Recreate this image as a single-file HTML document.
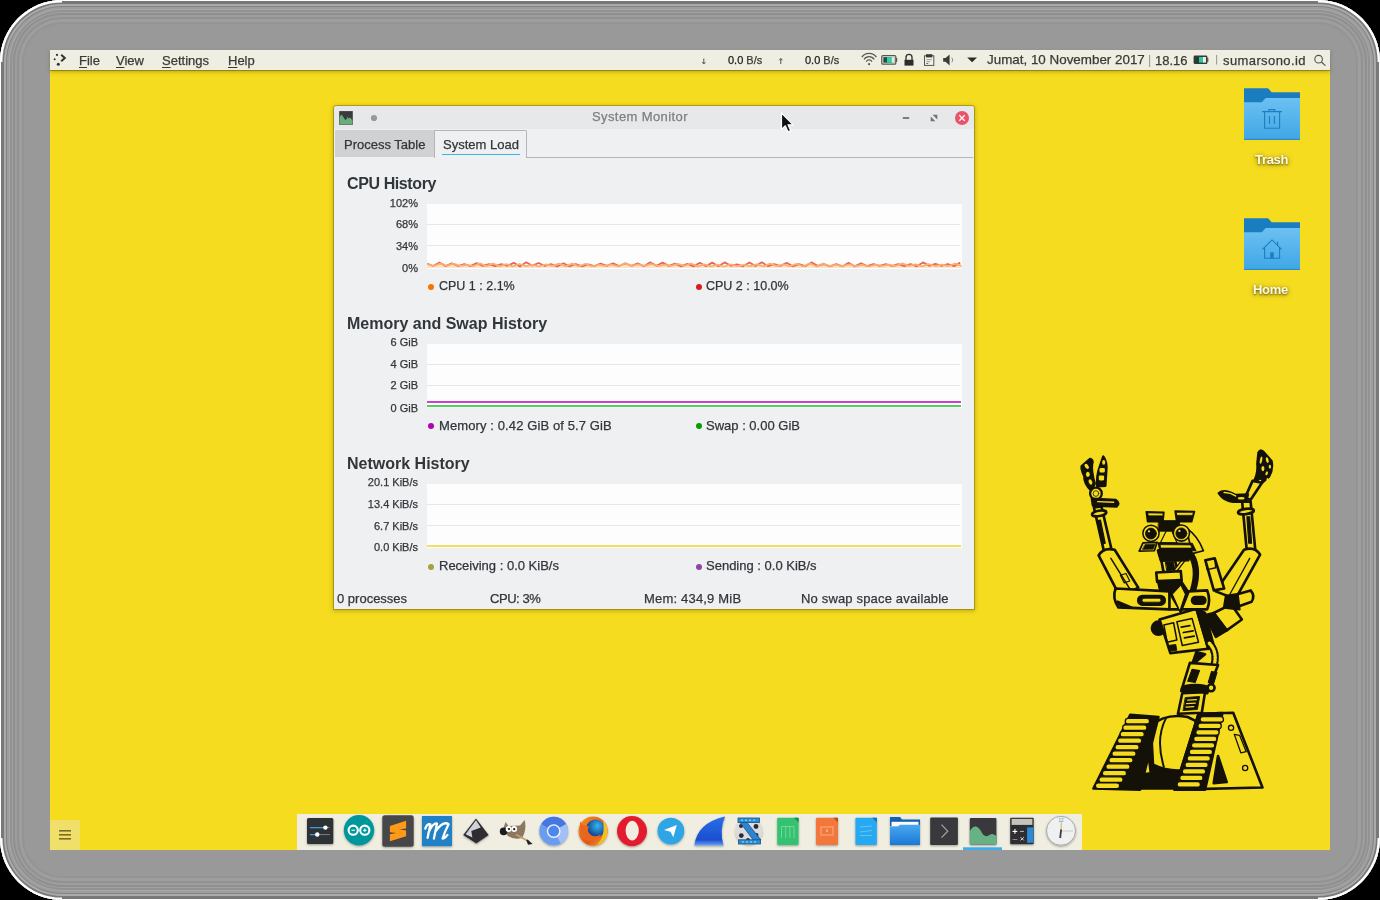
<!DOCTYPE html>
<html><head><meta charset="utf-8">
<style>
*{margin:0;padding:0;box-sizing:border-box}
html,body{width:1380px;height:900px;overflow:hidden;background:#000;font-family:"Liberation Sans",sans-serif;position:relative}
.t{will-change:transform;-webkit-text-stroke:0.25px currentColor}
#frame{position:absolute;left:0;top:0;width:1380px;height:900px;border-radius:62px;background:#999;
box-shadow:inset 0 0 0 1px #fff,inset 0 0 0 4px #787878,inset 0 0 0 6px #aaa,inset 0 0 0 7px #848484,inset 0 0 0 9px #9d9d9d,inset 0 0 0 10px #a7a7a7,inset 0 0 0 12px #929292,inset 0 0 0 13px #a1a1a1,inset 0 0 0 15px #8f8f8f,inset 0 0 0 17px #9d9d9d,inset 0 0 0 19px #929292,inset 0 0 0 22px #9e9e9e,inset 0 0 0 24px #949494}
#screen{position:absolute;left:50px;top:50px;width:1280px;height:800px;background:#f5dc1f;overflow:hidden}
.t{position:absolute;line-height:1;white-space:nowrap}
.a{position:absolute}
#menubar{position:absolute;left:50px;top:50px;width:1280px;height:20px;background:#efeee2;box-shadow:0 1px 0.5px rgba(90,75,0,.45),0 2px 4px rgba(90,75,0,.35)}
.mb{font-size:13px;color:#3b3a33}
.mb u{text-decoration:underline;text-decoration-thickness:1px;text-underline-offset:1.5px}
#win{position:absolute;left:334px;top:106px;width:640px;height:503px;background:#eff0f1;border-radius:3px 3px 0 0;box-shadow:0 0 0 1px rgba(120,105,0,.45),0 1px 4px 1px rgba(90,75,0,.35)}
#titlebar{position:absolute;left:0;top:0;width:640px;height:23px;background:#e7e8ea;border-radius:3px 3px 0 0}
.w13{font-size:13px;color:#31363b}
.ax{font-size:11px;color:#31363b;text-align:right;width:60px}
.h{font-size:16px;font-weight:bold;color:#31363b;-webkit-text-stroke:0}
.plot{position:absolute;left:427px;width:535px;background:#fdfdfd}
.grid{position:absolute;left:0;width:533px;height:1px;background:#e6e7e8}
.dot{position:absolute;width:6px;height:6px;border-radius:50%}
#dock{position:absolute;left:297px;top:814px;width:785px;height:36px;background:#efeee0}
</style></head><body>
<div id="frame"></div>
<svg class="a" style="left:0;top:0" width="1380" height="900" viewBox="0 0 1380 900">
  <g fill="none" stroke="#fff" stroke-width="2.2">
    <path d="M1.3 62 A60.7 60.7 0 0 1 62 1.3"/>
    <path d="M1318 1.3 A60.7 60.7 0 0 1 1378.7 62"/>
    <path d="M1378.7 838 A60.7 60.7 0 0 1 1318 898.7"/>
    <path d="M62 898.7 A60.7 60.7 0 0 1 1.3 838"/>
  </g>
</svg>
<div id="screen"></div>

<!-- menubar -->
<div id="menubar"></div>
<div class="t mb" style="left:79px;top:53.8px"><u>F</u>ile</div>
<div class="t mb" style="left:116px;top:53.8px"><u>V</u>iew</div>
<div class="t mb" style="left:162px;top:53.8px"><u>S</u>ettings</div>
<div class="t mb" style="left:228px;top:53.8px"><u>H</u>elp</div>
<svg class="a" style="left:50px;top:50px" width="1280" height="20" viewBox="50 50 1280 20">
  <!-- launcher dots -->
  <g fill="#35342e">
    <circle cx="57" cy="54.9" r="1.1"/><circle cx="54.7" cy="59.2" r="1"/><circle cx="58.3" cy="64.2" r="1.5"/>
    <path d="M61.2 54.8 L64.8 58 L61.2 61.2" fill="none" stroke="#35342e" stroke-width="2"/>
  </g>
  <!-- arrows -->
  <g stroke="#55544c" stroke-width="1" fill="none">
    <path d="M703.8 58.5 V64"/><path d="M702.2 62.2 L703.8 64 L705.4 62.2"/>
    <path d="M780.8 58.5 V64"/><path d="M779.2 60.3 L780.8 58.5 L782.4 60.3"/>
  </g>
  <!-- wifi -->
  <g fill="none" stroke="#5a5953" stroke-width="1.3">
    <path d="M861.8 57.2 A9 9 0 0 1 876.4 57.2"/>
    <path d="M864 59.4 A6 6 0 0 1 874.2 59.4"/>
    <path d="M866.3 61.6 A3.2 3.2 0 0 1 871.9 61.6"/>
  </g>
  <circle cx="869.1" cy="64.2" r="1.1" fill="#5a5953"/>
  <!-- battery -->
  <rect x="881.8" y="55.6" width="14" height="8.6" rx="1" fill="none" stroke="#55544c" stroke-width="1.2"/>
  <rect x="896" y="58" width="1.2" height="3.8" fill="#55544c"/>
  <rect x="883.3" y="57.1" width="11" height="5.6" fill="#1e4f3c"/>
  <rect x="887" y="57.1" width="5" height="5.6" fill="#2fd0a8"/>
  <rect x="891.8" y="57.1" width="2.5" height="5.6" fill="#e0eee0"/>
  <!-- lock -->
  <path d="M906 60 V57.3 A3 3 0 0 1 912 57.3 V60" fill="none" stroke="#2e2d29" stroke-width="1.3"/>
  <rect x="904.5" y="59.8" width="9" height="5.8" fill="#2e2d29"/>
  <!-- clipboard -->
  <rect x="924.5" y="55.8" width="9.3" height="9.6" fill="#f4f3ea" stroke="#55544c" stroke-width="1"/>
  <rect x="926" y="54.2" width="6.3" height="3.2" fill="#3a3934"/>
  <rect x="926.3" y="59.3" width="5.5" height="0.8" fill="#888"/><rect x="926.3" y="61.3" width="4" height="0.8" fill="#888"/><rect x="926.3" y="63.1" width="2" height="0.8" fill="#444"/>
  <!-- volume -->
  <path d="M943.2 58 H945.6 L949.6 54.4 V65.4 L945.6 61.8 H943.2 Z" fill="#3b3a34"/>
  <path d="M951.8 57.6 A3.6 3.6 0 0 1 951.8 62.2" fill="none" stroke="#8a8980" stroke-width="1"/>
  <!-- dropdown triangle -->
  <path d="M967.2 57.6 H977 L972.1 62.3 Z" fill="#2e2d29"/>
  <!-- separators -->
  <rect x="1149.2" y="55" width="0.9" height="12" fill="#8e8d85"/>
  <rect x="1216.2" y="55" width="0.9" height="9.5" fill="#8e8d85"/>
  <!-- battery 2 -->
  <rect x="1193.6" y="55.5" width="13.8" height="8.6" rx="1.4" fill="#3a3934"/>
  <rect x="1207.3" y="57.8" width="1" height="4" fill="#3a3934"/>
  <rect x="1195" y="57" width="11" height="5.6" fill="#1f3f38"/>
  <rect x="1199" y="57" width="4.5" height="5.6" fill="#2fc8a0"/>
  <rect x="1203" y="57" width="3" height="5.6" fill="#e8f0e8"/>
  <!-- search -->
  <circle cx="1318.6" cy="59.2" r="3.8" fill="none" stroke="#55544c" stroke-width="1.1"/>
  <path d="M1321.4 62 L1325.4 65.6" stroke="#55544c" stroke-width="1.2"/>
</svg>
<div class="t mb" style="left:728.3px;top:54.6px;font-size:11px"><span style="color:#1c1c18">0.0</span> B/s</div>
<div class="t mb" style="left:804.8px;top:54.6px;font-size:11px"><span style="color:#1c1c18">0.0</span> B/s</div>
<div class="t mb" style="left:986.5px;top:53.3px;font-size:13.4px">Jumat, 10 November 2017</div>
<div class="t mb" style="left:1154.8px;top:53.6px">18.16</div>
<div class="t mb" style="left:1223.3px;top:53.6px;letter-spacing:0.4px">sumarsono.id</div>

<!-- window -->
<div id="win">
  <div id="titlebar"></div>
</div>
<div class="t" style="left:591.7px;top:109.9px;font-size:13px;letter-spacing:0.4px;color:#7d7e81">System Monitor</div>
<svg class="a" style="left:334px;top:106px" width="640" height="23" viewBox="334 106 640 23">
  <rect x="339.2" y="111.1" width="13.6" height="13.7" fill="#3b3b3f"/>
  <path d="M339.6 124.6 V117 L341.5 114.6 L343 116.5 L344.3 118.8 L345.5 119.9 L347 118.8 L347.6 116.6 L348.6 118.6 L350.2 117.4 L351.2 119 L352.4 120 V124.6 Z" fill="#6aad7a"/>
  <circle cx="374" cy="118" r="3.1" fill="#98999b"/>
  <rect x="902.8" y="117" width="6.4" height="2" fill="#7c7d80"/>
  <path d="M932.6 114.8 H937.3 V119.5 Z M930.7 116.6 V121.2 H935.3 Z" fill="#707174"/>
  <circle cx="962" cy="118" r="7" fill="#e9546b"/>
  <path d="M959.3 115.3 L964.7 120.7 M964.7 115.3 L959.3 120.7" stroke="#fff" stroke-width="1.3"/>
</svg>
<!-- cursor -->
<svg class="a" style="left:779px;top:111px;z-index:50" width="16" height="24" viewBox="0 0 16 24">
  <path d="M2.5 2 V18.5 L6.3 14.8 L9 20.8 L11.6 19.6 L9 13.8 L14.2 13.8 Z" fill="#111" stroke="#fff" stroke-width="1.2" stroke-linejoin="round"/>
</svg>
<div class="a" style="left:335px;top:130px;width:99px;height:27px;background:#d0d1d3"></div>
<div class="a" style="left:434px;top:130px;width:93px;height:28px;background:#eff0f1;border:1px solid #b4b5b7;border-bottom:none;border-radius:0 2px 0 0"></div>
<div class="a" style="left:527px;top:157px;width:446px;height:1px;background:#b4b5b7"></div>
<div class="a" style="left:442px;top:154px;width:78px;height:1px;background:#45b0e6"></div>
<div class="t w13" style="left:343.5px;top:137.9px">Process Table</div>
<div class="t w13" style="left:442.6px;top:137.9px">System Load</div>

<div class="t h" style="left:346.5px;top:176px;letter-spacing:-0.4px">CPU History</div>
<div class="t ax" style="left:358px;top:197.5px">102%</div>
<div class="t ax" style="left:358px;top:219.2px">68%</div>
<div class="t ax" style="left:358px;top:241.3px">34%</div>
<div class="t ax" style="left:358px;top:263.3px">0%</div>
<div class="plot" style="top:204px;height:65px">
  <div class="grid" style="top:20px"></div><div class="grid" style="top:41px"></div>
  <svg class="a" id="cpusvg" style="left:0;top:0" width="535" height="65" viewBox="0 0 535 65">
    <path d="M0.0 59.9 L6.6 62.0 L13.2 59.6 L19.8 61.9 L26.4 59.7 L33.0 61.9 L39.6 60.9 L46.2 62.2 L52.8 59.4 L59.4 62.1 L66.0 59.5 L72.6 62.4 L79.2 60.1 L85.8 62.3 L92.4 60.0 L99.0 62.1 L105.6 60.9 L112.2 62.4 L118.8 60.5 L125.4 61.9 L132.0 59.7 L138.6 62.4 L145.2 59.6 L151.8 62.4 L158.4 59.9 L165.0 62.4 L171.6 60.9 L178.2 61.9 L184.8 60.6 L191.4 62.4 L198.0 59.3 L204.6 61.9 L211.2 60.4 L217.8 61.9 L224.4 60.0 L231.0 62.1 L237.6 60.6 L244.2 61.9 L250.8 59.8 L257.4 61.9 L264.0 59.5 L270.6 62.3 L277.2 60.3 L283.8 62.4 L290.4 60.7 L297.0 62.5 L303.6 60.4 L310.2 62.1 L316.8 60.9 L323.4 62.1 L330.0 60.4 L336.6 62.3 L343.2 59.6 L349.8 62.2 L356.4 60.4 L363.0 62.2 L369.6 59.8 L376.2 62.5 L382.8 59.3 L389.4 62.5 L396.0 59.7 L402.6 62.0 L409.2 60.9 L415.8 62.0 L422.4 60.3 L429.0 62.1 L435.6 60.9 L442.2 62.5 L448.8 60.6 L455.4 61.9 L462.0 60.6 L468.6 62.0 L475.2 59.4 L481.8 61.9 L488.4 60.3 L495.0 62.3 L501.6 60.1 L508.2 62.0 L514.8 60.7 L521.4 62.0 L528.0 59.6 L534.6 61.9 L535 64 L0 64 Z" fill="#fce3cc"/>
    <path d="M0.0 59.5 L6.2 62.0 L12.4 58.5 L18.6 62.1 L24.8 59.3 L31.0 62.0 L37.2 60.0 L43.4 62.1 L49.6 59.1 L55.8 61.8 L62.0 60.2 L68.2 62.2 L74.4 60.2 L80.6 61.8 L86.8 58.9 L93.0 62.5 L99.2 58.3 L105.4 61.7 L111.6 59.0 L117.8 62.0 L124.0 60.1 L130.2 62.5 L136.4 59.3 L142.6 62.4 L148.8 60.0 L155.0 62.3 L161.2 60.3 L167.4 62.1 L173.6 59.5 L179.8 61.8 L186.0 59.3 L192.2 62.0 L198.4 59.4 L204.6 61.9 L210.8 59.4 L217.0 62.3 L223.2 58.3 L229.4 61.7 L235.6 58.6 L241.8 61.9 L248.0 59.7 L254.2 62.3 L260.4 59.8 L266.6 62.4 L272.8 58.8 L279.0 62.2 L285.2 58.6 L291.4 62.2 L297.6 58.4 L303.8 61.8 L310.0 60.4 L316.2 62.3 L322.4 58.5 L328.6 62.1 L334.8 58.3 L341.0 62.2 L347.2 60.2 L353.4 62.0 L359.6 58.8 L365.8 62.3 L372.0 60.2 L378.2 62.2 L384.4 58.4 L390.6 61.9 L396.8 60.2 L403.0 62.3 L409.2 60.2 L415.4 62.4 L421.6 58.7 L427.8 62.4 L434.0 59.2 L440.2 62.1 L446.4 60.0 L452.6 61.9 L458.8 60.1 L465.0 62.0 L471.2 60.2 L477.4 62.1 L483.6 60.0 L489.8 62.3 L496.0 58.4 L502.2 61.8 L508.4 59.8 L514.6 61.8 L520.8 60.0 L527.0 62.2 L533.2 58.6" fill="none" stroke="#e6665a" stroke-width="1.8" stroke-linejoin="round"/>
    <path d="M0.0 59.9 L6.6 62.0 L13.2 59.6 L19.8 61.9 L26.4 59.7 L33.0 61.9 L39.6 60.9 L46.2 62.2 L52.8 59.4 L59.4 62.1 L66.0 59.5 L72.6 62.4 L79.2 60.1 L85.8 62.3 L92.4 60.0 L99.0 62.1 L105.6 60.9 L112.2 62.4 L118.8 60.5 L125.4 61.9 L132.0 59.7 L138.6 62.4 L145.2 59.6 L151.8 62.4 L158.4 59.9 L165.0 62.4 L171.6 60.9 L178.2 61.9 L184.8 60.6 L191.4 62.4 L198.0 59.3 L204.6 61.9 L211.2 60.4 L217.8 61.9 L224.4 60.0 L231.0 62.1 L237.6 60.6 L244.2 61.9 L250.8 59.8 L257.4 61.9 L264.0 59.5 L270.6 62.3 L277.2 60.3 L283.8 62.4 L290.4 60.7 L297.0 62.5 L303.6 60.4 L310.2 62.1 L316.8 60.9 L323.4 62.1 L330.0 60.4 L336.6 62.3 L343.2 59.6 L349.8 62.2 L356.4 60.4 L363.0 62.2 L369.6 59.8 L376.2 62.5 L382.8 59.3 L389.4 62.5 L396.0 59.7 L402.6 62.0 L409.2 60.9 L415.8 62.0 L422.4 60.3 L429.0 62.1 L435.6 60.9 L442.2 62.5 L448.8 60.6 L455.4 61.9 L462.0 60.6 L468.6 62.0 L475.2 59.4 L481.8 61.9 L488.4 60.3 L495.0 62.3 L501.6 60.1 L508.2 62.0 L514.8 60.7 L521.4 62.0 L528.0 59.6 L534.6 61.9" fill="none" stroke="#f8b070" stroke-width="1.8" stroke-linejoin="round"/>
  </svg>
</div>
<div class="dot" style="left:428px;top:284px;background:#f67400"></div>
<div class="t w13" style="left:438.6px;top:280px;font-size:12.5px">CPU 1 : 2.1%</div>
<div class="dot" style="left:696px;top:284px;background:#da1e1e"></div>
<div class="t w13" style="left:706.2px;top:280px;font-size:12.5px">CPU 2 : 10.0%</div>

<div class="t h" style="left:346.5px;top:316.4px">Memory and Swap History</div>
<div class="t ax" style="left:358px;top:337.3px">6 GiB</div>
<div class="t ax" style="left:358px;top:358.9px">4 GiB</div>
<div class="t ax" style="left:358px;top:380.4px">2 GiB</div>
<div class="t ax" style="left:358px;top:402.7px">0 GiB</div>
<div class="plot" style="top:344px;height:64px">
  <div class="grid" style="top:20px"></div><div class="grid" style="top:41px"></div>
  <div class="a" style="left:0;top:56.5px;width:534px;height:2px;background:#cb3fd2"></div>
  <div class="a" style="left:0;top:61px;width:534px;height:2px;background:#4dd25a"></div>
</div>
<div class="dot" style="left:428px;top:423px;background:#b400b4"></div>
<div class="t w13" style="left:438.6px;top:419.4px;letter-spacing:0.11px">Memory : 0.42 GiB of 5.7 GiB</div>
<div class="dot" style="left:696px;top:423px;background:#00a000"></div>
<div class="t w13" style="left:706.2px;top:419.4px">Swap : 0.00 GiB</div>

<div class="t h" style="left:346.5px;top:455.6px">Network History</div>
<div class="t ax" style="left:358px;top:477.1px">20.1 KiB/s</div>
<div class="t ax" style="left:358px;top:498.8px">13.4 KiB/s</div>
<div class="t ax" style="left:358px;top:520.8px">6.7 KiB/s</div>
<div class="t ax" style="left:358px;top:542.4px">0.0 KiB/s</div>
<div class="plot" style="top:483.5px;height:64px">
  <div class="grid" style="top:20px"></div><div class="grid" style="top:41px"></div>
  <div class="a" style="left:0;top:61.5px;width:534px;height:2px;background:#f0e060"></div>
</div>
<div class="dot" style="left:428px;top:563.5px;background:#a9a040"></div>
<div class="t w13" style="left:438.6px;top:558.6px">Receiving : 0.0 KiB/s</div>
<div class="dot" style="left:696px;top:563.5px;background:#8e44ad"></div>
<div class="t w13" style="left:706.2px;top:558.6px">Sending : 0.0 KiB/s</div>

<div class="t w13" style="left:336.5px;top:591.7px">0 processes</div>
<div class="t w13" style="left:490px;top:591.7px;letter-spacing:-0.45px">CPU: 3%</div>
<div class="t w13" style="left:644.3px;top:591.7px;letter-spacing:0.19px">Mem: 434,9 MiB</div>
<div class="t w13" style="left:801.4px;top:591.7px;letter-spacing:0.17px">No swap space available</div>

<!-- desktop icons -->
<svg class="a" style="left:1238px;top:80px" width="70" height="200" viewBox="1238 80 70 200">
  <defs>
    <linearGradient id="fg" x1="0" y1="0" x2="0" y2="1"><stop offset="0" stop-color="#6cc0f1"/><stop offset="1" stop-color="#3fa7e6"/></linearGradient>
    
  </defs>
  <g>
      <path d="M1244 88.2 H1268.1 L1271.6 92.2 H1300 V100 H1266 L1262 103 H1244 Z" fill="#1a7dc0"/>
      <path d="M1244 102.3 H1261.8 L1265.7 98.1 H1300 V139.8 H1244 Z" fill="url(#fg)"/>
      <rect x="1244" y="138.8" width="56" height="1.2" fill="#2a8bd0"/>
    </g>
  <g fill="none" stroke="#1f7dbf" stroke-width="1.1">
    <path d="M1262.2 111.6 H1281.8 M1268.9 111.6 V109.6 H1274.8 V111.6 M1264.6 111.6 V128.3 H1279.6 V111.6 M1269.5 116 V124 M1274.4 116 V124"/>
  </g>
  <g transform="translate(0 130)">
      <path d="M1244 88.2 H1268.1 L1271.6 92.2 H1300 V100 H1266 L1262 103 H1244 Z" fill="#1a7dc0"/>
      <path d="M1244 102.3 H1261.8 L1265.7 98.1 H1300 V139.8 H1244 Z" fill="url(#fg)"/>
      <rect x="1244" y="138.8" width="56" height="1.2" fill="#2a8bd0"/>
    </g>
  <g fill="none" stroke="#1f7dbf" stroke-width="1.1">
    <path d="M1262.4 249.4 L1272 239.9 L1281.6 249.4 M1264.6 247.3 V258.3 H1279.6 V247.3 M1277.6 241.6 V245.4"/>
  </g>
  <rect x="1270.2" y="252.3" width="3.5" height="6.3" fill="#1f7dbf"/>
</svg>
<!-- robot -->
<svg class="a" style="left:1060px;top:440px" width="240" height="360" viewBox="1060 440 240 360">
 <g stroke="#141208" stroke-linejoin="round" stroke-linecap="round">
  <!-- lower part -->
  <g transform="translate(1075 600) scale(0.21673)" stroke-width="12" fill="#f5dc1f">
    <!-- right shoulder cylinder -->
    <path d="M640 60 L720 20 L770 90 L700 140 Z"/>
    <path d="M600 70 L640 60 L700 140 L650 170 Z" fill="#141208"/>
    <!-- torso -->
    <circle cx="385" cy="130" r="30" fill="#141208"/>
    <path d="M390 90 L560 40 L615 225 L440 245 Z"/>
    <path d="M560 40 L600 60 L640 210 L615 225 Z" fill="#141208"/>
    <path d="M410 115 L455 105 L470 185 L425 195 Z" fill="none" stroke-width="7"/>
    <path d="M470 100 L540 85 L570 195 L495 210 Z" fill="none" stroke-width="7"/>
    <path d="M490 125 L530 118 M500 150 L545 142 M505 175 L550 167" stroke-width="8"/>
    <path d="M430 210 L465 205 L470 232 L436 236 Z" fill="#141208" stroke-width="4"/>
    <!-- cable -->
    <path d="M620 200 Q660 240 640 310" fill="none" stroke-width="34"/>
    <path d="M620 200 Q660 240 640 310" fill="none" stroke="#f5dc1f" stroke-width="16" stroke-dasharray="6 8"/>
    <!-- waist tube -->
    <path d="M560 240 L600 250 L540 300 Z" fill="#141208"/>
    <path d="M530 290 L660 300 L610 430 L490 420 Z"/>
    <path d="M540 320 L575 325 L555 380 L520 375 Z" fill="#141208" stroke-width="5"/>
    <path d="M630 330 L655 335 L640 385 L615 380 Z" fill="#141208" stroke-width="5"/>
    <ellipse cx="555" cy="410" rx="62" ry="18" fill="#141208"/>
    <circle cx="628" cy="405" r="16"/>
    <path d="M495 430 L600 425 L585 520 L475 525 Z"/>
    <path d="M510 450 L575 445 L565 505 L500 510 Z" fill="#141208" stroke-width="4"/>
    <path d="M520 462 L560 460 M515 478 L555 476 M512 494 L548 492" stroke="#f5dc1f" stroke-width="6"/>
    <!-- base black -->
    <path d="M260 700 L500 700 L480 870 L240 870 Z" fill="#141208"/>
    <!-- hub -->
    <path d="M350 580 Q420 520 520 540 L560 560 L540 780 Q440 800 360 760 Z"/>
    <path d="M420 545 Q370 640 410 770" fill="none" stroke-width="9"/>
    <path d="M300 730 L340 720 L350 800 L305 805 Z"/>
    <path d="M250 800 L280 795 L285 835 L252 840 Z"/>
    <!-- left tread -->
    <path d="M255 530 L385 540 L300 875 L85 870 Z" fill="#141208"/>
    <g fill="#f5dc1f" stroke-width="6">
      <rect x="232" y="546" width="112" height="26" rx="13"/>
      <rect x="220" y="576" width="112" height="26" rx="13"/>
      <rect x="208" y="606" width="112" height="26" rx="13"/>
      <rect x="196" y="636" width="112" height="26" rx="13"/>
      <rect x="184" y="666" width="112" height="26" rx="13"/>
      <rect x="170" y="696" width="112" height="26" rx="13"/>
      <rect x="156" y="726" width="112" height="26" rx="13"/>
      <rect x="142" y="756" width="112" height="26" rx="13"/>
      <rect x="126" y="786" width="112" height="26" rx="13"/>
      <rect x="110" y="816" width="112" height="26" rx="13"/>
      <rect x="94" y="844" width="112" height="26" rx="13"/>
    </g>
    <!-- right tread -->
    <path d="M570 525 L730 520 L865 865 L460 875 Z"/>
    <path d="M570 525 L680 522 L600 875 L460 875 Z" fill="#141208"/>
    <g fill="#f5dc1f" stroke-width="6">
      <rect x="577" y="538" width="108" height="26" rx="13"/>
      <rect x="567" y="568" width="108" height="26" rx="13"/>
      <rect x="557" y="598" width="108" height="26" rx="13"/>
      <rect x="547" y="628" width="108" height="26" rx="13"/>
      <rect x="537" y="658" width="108" height="26" rx="13"/>
      <rect x="527" y="688" width="108" height="26" rx="13"/>
      <rect x="517" y="718" width="108" height="26" rx="13"/>
      <rect x="507" y="748" width="108" height="26" rx="13"/>
      <rect x="495" y="778" width="108" height="26" rx="13"/>
      <rect x="483" y="808" width="108" height="26" rx="13"/>
      <rect x="471" y="838" width="108" height="26" rx="13"/>
    </g>
    <path d="M660 720 L700 840 L640 845 Z" fill="#141208"/>
    <circle cx="720" cy="590" r="12" fill="none" stroke-width="6"/>
    <circle cx="785" cy="775" r="12" fill="none" stroke-width="6"/>
    <path d="M735 620 L760 625 L790 700 L765 705 Z" fill="none" stroke-width="6"/>
  </g>
  <!-- upper part -->
  <g transform="translate(1075 445) scale(0.18886)" stroke-width="14" fill="#f5dc1f">
    <!-- left claw -->
    <path d="M80 74 Q98 80 90 100 Q84 140 104 205 L86 240 Q48 205 50 165 Q32 130 36 112 Z" fill="#141208"/>
    <g fill="#f5dc1f" stroke="none">
      <ellipse cx="62" cy="113" rx="9" ry="15" transform="rotate(-40 62 113)"/>
      <ellipse cx="68" cy="155" rx="10" ry="14"/>
      <ellipse cx="82" cy="196" rx="9" ry="15" transform="rotate(-25 82 196)"/>
    </g>
    <path d="M150 62 Q170 90 165 140 L160 215 L118 218 Q115 160 130 120 Z" fill="#141208"/>
    <g fill="#f5dc1f" stroke="none">
      <ellipse cx="152" cy="92" rx="8" ry="13"/>
      <rect x="130" y="122" width="28" height="24" rx="6"/>
      <rect x="126" y="162" width="28" height="26" rx="6"/>
    </g>
    <circle cx="111" cy="257" r="31" stroke-width="12"/>
    <circle cx="111" cy="257" r="15" fill="#f5dc1f" stroke-width="4"/>
    <path d="M90 285 L215 292 Q240 310 220 325 L95 320 Z" fill="#141208"/>
    <path d="M120 300 L205 303" stroke="#f5dc1f" stroke-width="7"/>
    <!-- left forearm -->
    <path d="M100 330 L140 325 L195 560 L155 570 Z"/>
    <path d="M120 400 L135 398 L160 520 L145 524 Z" fill="#141208" stroke-width="6"/>
    <ellipse cx="128" cy="362" rx="38" ry="14" transform="rotate(-10 128 362)"/>
    <!-- left upper arm -->
    <path d="M125 585 Q150 540 210 555 L335 755 L240 805 Z"/>
    <path d="M190 600 L295 770" fill="none" stroke-width="8"/>
    <path d="M240 690 L270 680 L290 720 L260 730 Z" fill="none" stroke-width="6"/>
    <!-- right hand -->
    <path d="M972 40 Q985 18 1005 45 L1040 85 Q1050 130 1025 170 L968 218 L945 200 Q972 150 966 100 Z" fill="#141208"/>
    <g fill="#f5dc1f" stroke="none">
      <ellipse cx="985" cy="80" rx="6" ry="20" transform="rotate(10 985 80)"/>
      <ellipse cx="1018" cy="80" rx="7" ry="15" transform="rotate(-15 1018 80)"/>
      <ellipse cx="995" cy="125" rx="8" ry="14"/>
      <ellipse cx="1032" cy="115" rx="6" ry="10"/>
      <ellipse cx="1015" cy="150" rx="6" ry="11" transform="rotate(20 1015 150)"/>
      <ellipse cx="1020" cy="185" rx="6" ry="10"/>
      <ellipse cx="975" cy="195" rx="14" ry="6" transform="rotate(-40 975 195)"/>
    </g>
    <path d="M940 190 L990 200 L930 290 L900 280 Z"/>
    <path d="M762 255 Q790 232 850 265 L915 262 L905 300 L835 300 Q790 295 762 255 Z" fill="#141208"/>
    <path d="M790 252 Q820 250 850 270" fill="none" stroke="#f5dc1f" stroke-width="8"/>
    <ellipse cx="880" cy="282" rx="18" ry="7" fill="#f5dc1f" stroke="none"/>
    <!-- right forearm -->
    <path d="M885 300 L930 300 L955 560 L910 565 Z"/>
    <path d="M910 380 L925 380 L935 520 L920 520 Z" fill="#141208" stroke-width="6"/>
    <ellipse cx="905" cy="352" rx="42" ry="14" transform="rotate(-8 905 352)"/>
    <!-- right upper arm -->
    <path d="M895 555 Q950 535 980 580 L850 815 L745 775 Z"/>
    <path d="M925 600 L820 790" fill="none" stroke-width="7"/>
    <path d="M860 790 L930 770 Q955 800 935 830 L850 860 Z"/>
    <path d="M800 800 L860 790 L870 870 L790 860 Z" fill="#141208"/>
    <!-- right shoulder block -->
    <path d="M690 610 L740 600 L790 760 L735 770 Z"/>
    <path d="M690 610 L740 600 L745 650 L700 660 Z" fill="none" stroke-width="7"/>
    <!-- neck -->
    <path d="M600 560 Q665 640 625 770" fill="none" stroke-width="34"/>
    <path d="M440 558 L612 556 L600 600 L455 604 Z" fill="#141208"/>
    <path d="M455 600 L525 598 L548 680 L472 690 Z"/>
    <path d="M480 620 L520 618 L530 660 L488 666 Z" fill="#141208" stroke-width="5"/>
    <path d="M590 590 L505 700" fill="none" stroke-width="22"/>
    <path d="M590 590 L505 700" fill="none" stroke="#f5dc1f" stroke-width="8"/>
    <!-- head -->
    <path d="M590 440 Q650 480 680 560 L620 575 Z" stroke-width="9"/>
    <path d="M440 560 L612 556 L600 610 L455 612 Z" fill="#141208"/>
    <path d="M377 353 L471 356 L466 406 L384 406 Z" fill="#141208" stroke-width="8"/>
    <path d="M386 360 L466 362 L464 374 L390 374 Z" fill="#f5dc1f" stroke-width="3"/>
    <path d="M530 350 L633 352 L618 406 L538 406 Z" fill="#141208" stroke-width="8"/>
    <path d="M538 357 L626 358 L622 372 L541 372 Z" fill="#f5dc1f" stroke-width="3"/>
    <path d="M444 400 L552 400 L560 457 L440 457 Z" fill="#141208" stroke-width="4"/>
    <path d="M483 456 L513 456 L540 518 L452 518 Z" stroke-width="6"/>
    <circle cx="402.4" cy="467.5" r="43" stroke-width="8"/>
    <circle cx="402" cy="469" r="29" fill="#141208" stroke-width="4"/>
    <circle cx="392" cy="457" r="6" fill="#e8d870" stroke="none"/>
    <circle cx="563.4" cy="466" r="43" stroke-width="8"/>
    <circle cx="563" cy="468" r="29" fill="#141208" stroke-width="4"/>
    <circle cx="553" cy="455" r="6" fill="#e8d870" stroke="none"/>
    <path d="M440 518 L620 520 L640 560 L450 562 Z" fill="#141208" stroke-width="6"/>
    <path d="M452 528 L612 530 L618 545 L455 545 Z" fill="#f5dc1f" stroke-width="3"/>
    <path d="M360 518 L435 516 L420 560 L340 562 Z" stroke-width="9"/>
    <path d="M372 527 L425 526 L414 552 L358 553 Z" fill="#141208" stroke-width="3"/>
    <!-- chest -->
    <path d="M430 675 L560 668 L565 720 L435 725 Z"/>
    <path d="M440 720 L560 715 L555 760 L450 765 Z" fill="#141208"/>
    <!-- shoulder bar -->
    <path d="M215 760 L500 775 Q520 820 500 870 L230 860 Q195 810 215 760 Z"/>
    <path d="M225 830 L250 860 L300 862 Z" fill="#141208"/>
    <rect x="335" y="800" width="140" height="45" rx="22" fill="#141208"/>
    <rect x="355" y="812" width="100" height="20" rx="10" fill="#f5dc1f" stroke-width="4"/>
    <path d="M500 780 L700 770 Q720 820 700 870 L500 870 Z"/>
    <rect x="620" y="805" width="70" height="35" rx="17" fill="#141208"/>
    <path d="M500 780 L560 720 L600 780 L560 880 Z" fill="#141208"/>
    <path d="M515 790 L560 740 L585 790 L555 880 Z" fill="#f5dc1f" stroke-width="6"/>
  </g>
 </g>
</svg>
<!-- desktop icons labels -->
<div class="t" style="left:1255px;top:152.8px;font-size:13px;font-weight:bold;color:#fffbe2;letter-spacing:-0.3px;-webkit-text-stroke:0;text-shadow:0 1px 2px rgba(70,60,0,.7),0 1px 5px rgba(70,60,0,.6)">Trash</div>
<div class="t" style="left:1253.4px;top:282.8px;font-size:13px;font-weight:bold;color:#fffbe2;letter-spacing:-0.3px;-webkit-text-stroke:0;text-shadow:0 1px 2px rgba(70,60,0,.7),0 1px 5px rgba(70,60,0,.6)">Home</div>

<!-- dock -->
<div id="dock"></div>
<div class="a" style="left:50px;top:820px;width:30px;height:30px;background:#f0e06a"></div>
<svg class="a" style="left:50px;top:800px" width="1040" height="50" viewBox="50 800 1040 50">
  <defs>
    <filter id="sh" x="-20%" y="-20%" width="140%" height="150%"><feDropShadow dx="0" dy="1" stdDeviation="0.8" flood-color="#000" flood-opacity="0.35"/></filter>
    <linearGradient id="wfin" x1="0" y1="0" x2="0" y2="1"><stop offset="0" stop-color="#2a6ee6"/><stop offset="0.8" stop-color="#1a4fd0"/><stop offset="1" stop-color="#6aa2f0"/></linearGradient>
    <linearGradient id="fol2" x1="0" y1="0" x2="0" y2="1"><stop offset="0" stop-color="#4aa8ee"/><stop offset="1" stop-color="#1b78d6"/></linearGradient>
    <radialGradient id="ffg" cx="0.6" cy="0.35" r="0.6"><stop offset="0" stop-color="#3ab4ee"/><stop offset="1" stop-color="#0d3f8e"/></radialGradient>
    <linearGradient id="ffo" x1="0" y1="0" x2="1" y2="1"><stop offset="0" stop-color="#f59a1a"/><stop offset="0.6" stop-color="#e5531e"/><stop offset="1" stop-color="#f0b020"/></linearGradient>
  </defs>
  <!-- hamburger -->
  <g fill="#7b6b2c"><rect x="59" y="830" width="12" height="1.6"/><rect x="59" y="834" width="12" height="1.6"/><rect x="59" y="838" width="12" height="1.6"/></g>
  <!-- 1 settings -->
  <g filter="url(#sh)"><rect x="307" y="818" width="26.3" height="26" rx="1.5" fill="#2e3035"/></g>
  <rect x="310" y="827" width="15" height="1.3" fill="#3b9dd8"/><rect x="325" y="827" width="4.5" height="1.1" fill="#777"/>
  <circle cx="325.4" cy="827.6" r="2.2" fill="#fff"/>
  <rect x="310" y="834" width="7" height="1.3" fill="#3b9dd8"/><rect x="317" y="834" width="13" height="1.1" fill="#777"/>
  <circle cx="317.3" cy="834.5" r="2.2" fill="#fff"/>
  <!-- 2 arduino -->
  <g filter="url(#sh)"><circle cx="359" cy="830.3" r="15.2" fill="#00979c"/></g>
  <g fill="none" stroke="#fff" stroke-width="2.1"><circle cx="353.2" cy="830.2" r="4.6"/><circle cx="364.8" cy="830.2" r="4.6"/></g>
  <rect x="351.5" y="829.7" width="3.4" height="1.1" fill="#fff"/><rect x="363.1" y="829.7" width="3.4" height="1.1" fill="#fff"/><rect x="364.3" y="828.5" width="1.1" height="3.4" fill="#fff"/>
  <!-- 3 sublime -->
  <g filter="url(#sh)"><rect x="382.3" y="815.2" width="31.4" height="31.6" rx="2.5" fill="#47474a"/></g>
  <path d="M389.9 825.9 L406.1 820.7 V828.4 L399.4 829.3 L406.1 830.4 V836.3 L389.9 841.3 V834.2 L396.2 833.1 L389.9 832.2 Z" fill="#ff9a16"/>
  <!-- 4 M -->
  <g filter="url(#sh)"><rect x="422" y="816" width="30" height="30.2" fill="#2080c4"/></g>
  <path d="M425.3 828.6 Q427 823.6 430.4 824.3 L427.6 837.8 M429 831.5 Q433.5 822.5 437 823.6 L433.9 838.6 M435.2 831.8 Q443 820.5 448.6 824.2 Q444.5 832 442.6 838.6 Q444.5 838.6 447.4 835" fill="none" stroke="#fff" stroke-width="2.3" stroke-linecap="round" stroke-linejoin="round"/>
  <!-- 5 diamond -->
  <g filter="url(#sh)"><path d="M476 818.4 L488.7 834.9 L476.3 843.6 L463.2 834.9 Z" fill="#2f2e33"/></g>
  <path d="M476 820.3 L480.7 827.6 L471.3 831 L472.4 837.5 L465.6 834.2 Z" fill="#d2d2d6"/>
  <!-- 6 gimp -->
  <path d="M505.5 822 L508.5 826 L520 825.5 L524.7 820.1 Q527 830 522 838 Q514 840 508 836 L503 830 Z" fill="#8c7860"/>
  <path d="M516 834.5 L529 841.5" stroke="#c0a070" stroke-width="1.6"/>
  <path d="M527 840 L531 843.5 L528.5 844 Z" fill="#222" stroke="#222" stroke-width="1.5"/>
  <circle cx="503.6" cy="831.4" r="3.8" fill="#1c1c22"/>
  <circle cx="508.6" cy="829" r="2.9" fill="#fff"/><circle cx="514.2" cy="829" r="2.9" fill="#fff"/>
  <circle cx="509" cy="829" r="1.1" fill="#111"/><circle cx="514.2" cy="829.2" r="1.1" fill="#111"/>
  <!-- 7 chromium -->
  <g filter="url(#sh)"><circle cx="553.7" cy="831.1" r="14.4" fill="#6c9cf0"/></g>
  <path d="M553.7 831.1 L541.3 823.9 A14.4 14.4 0 0 1 566.2 823.9 Z" fill="#4676df"/>
  <path d="M553.7 831.1 L566.2 823.9 A14.4 14.4 0 0 1 560.9 843.6 Z" fill="#a3bff7"/>
  <circle cx="553.7" cy="831.1" r="6.2" fill="#4e86ec" stroke="#eef4ff" stroke-width="1.4"/>
  <!-- 8 firefox -->
  <g filter="url(#sh)"><circle cx="593.1" cy="831.1" r="14.6" fill="url(#ffo)"/></g>
  <circle cx="595.5" cy="828.6" r="9.2" fill="url(#ffg)"/>
  <path d="M580 821 Q582 827 589 826 Q586 831 591 835 Q596 838 601 834 Q598 841 590 841 Q582 840 580 832 Z" fill="#e8661e"/>
  <path d="M603 820 Q609 826 607 836 Q604 843 596 845 Q606 838 603 820 Z" fill="#f5c020"/>
  <!-- 9 opera -->
  <g filter="url(#sh)"><ellipse cx="632" cy="831.1" rx="15" ry="15.1" fill="#e21d2e"/></g>
  <ellipse cx="632.2" cy="830.6" rx="6.6" ry="9.8" fill="#efeee0"/>
  <!-- 10 telegram -->
  <g filter="url(#sh)"><circle cx="670.9" cy="831.1" r="13.4" fill="#2da6e6"/></g>
  <path d="M664 830 L676.8 825 L673.3 837.3 L670.5 831.8 Z" fill="#fff"/>
  <!-- 11 wireshark -->
  <g filter="url(#sh)"><path d="M694.3 845.6 Q697 823 725.1 816.6 Q719 830 723.6 845.6 Z" fill="url(#wfin)"/></g>
  <!-- 12 openshot -->
  <g filter="url(#sh)"><circle cx="748.8" cy="831.1" r="13.3" fill="#dcdcde"/></g>
  <g fill="#2b2b2f"><circle cx="756" cy="826.5" r="2.4"/><circle cx="741.3" cy="835.6" r="2.4"/><circle cx="748" cy="840" r="2"/><circle cx="756.5" cy="835" r="2"/><circle cx="741" cy="826" r="2"/></g>
  <path d="M739 821 L745 820 L761 840 L754 841 Z" fill="#2a86d2" stroke="#1b4f86" stroke-width="0.8"/>
  <rect x="738" y="818" width="21.5" height="4.6" fill="#2a8ed2" stroke="#1b4f86" stroke-width="0.8"/>
  <rect x="738.5" y="839.8" width="22" height="4.2" fill="#2a8ed2" stroke="#1b4f86" stroke-width="0.8"/>
  <g fill="#7cc4f0"><rect x="741" y="819.5" width="2" height="1.5"/><rect x="745" y="819.5" width="2" height="1.5"/><rect x="749" y="819.5" width="2" height="1.5"/><rect x="753" y="819.5" width="2" height="1.5"/><rect x="742" y="841.2" width="2" height="1.5"/><rect x="746" y="841.2" width="2" height="1.5"/><rect x="750" y="841.2" width="2" height="1.5"/><rect x="754" y="841.2" width="2" height="1.5"/></g>
  <!-- 13 calc -->
  <g filter="url(#sh)"><rect x="777.2" y="817.8" width="21.4" height="27.2" rx="1" fill="#36c26f"/></g>
  <path d="M794 817.8 H798.6 V822.4 Z" fill="#1f8a48"/>
  <g fill="none" stroke="#7ad9a0" stroke-width="0.9"><path d="M781.5 838 V826.5 H794 V838 M785.7 826.5 V838 M789.9 826.5 V838"/></g>
  <!-- 14 impress -->
  <g filter="url(#sh)"><rect x="816" y="817.8" width="22" height="27.2" rx="1" fill="#f3763a"/></g>
  <path d="M833.4 817.8 H838 V822.4 Z" fill="#b84a20"/>
  <rect x="821" y="827" width="12" height="8" fill="none" stroke="#f9b08a" stroke-width="1"/>
  <rect x="826" y="829.5" width="2" height="2.4" fill="#f9b08a"/>
  <!-- 15 writer -->
  <g filter="url(#sh)"><rect x="855.4" y="817.8" width="21.5" height="27.2" rx="1" fill="#27a9f0"/></g>
  <path d="M872.3 817.8 H876.9 V822.4 Z" fill="#1a6ab8"/>
  <g stroke="#6ac6f6" stroke-width="0.9"><path d="M860 827 L872 826 M860 832 L872 830.5 M860 835.5 H872"/></g>
  <!-- 16 folder -->
  <g filter="url(#sh)">
    <path d="M890 817 H900 L902 819.5 H920 V826 H890 Z" fill="#1760b0"/>
    <rect x="891.5" y="821.8" width="27" height="4.5" fill="#fafafa"/>
    <path d="M890 826.5 H898 L900 824.8 H920 V845 H890 Z" fill="url(#fol2)"/>
  </g>
  <!-- 17 terminal -->
  <g filter="url(#sh)"><rect x="930.2" y="817.5" width="27.7" height="27.4" rx="1" fill="#37383c"/></g>
  <path d="M941.5 824.6 L947.7 831.2 L941.5 837.6" fill="none" stroke="#a7a8aa" stroke-width="1.2"/>
  <!-- 18 sysmon -->
  <g filter="url(#sh)"><rect x="969.8" y="818" width="26.6" height="26.6" rx="1" fill="#38393d"/></g>
  <path d="M970 844.6 V831 Q972.5 825.8 976 826.5 Q979.5 827.5 982 833 Q984.5 838 988.5 835.5 Q991.5 833 994 834.5 L996.4 836 V844.6 Z" fill="#68b184"/>
  <rect x="963" y="847.3" width="39" height="2.7" fill="#3daee9"/>
  <!-- 19 calculator -->
  <g filter="url(#sh)"><rect x="1010.2" y="817.8" width="23.5" height="26.5" rx="1" fill="#2d2e32"/></g>
  <rect x="1011.6" y="818.9" width="20.8" height="6" fill="#c6c4ba"/>
  <rect x="1027.1" y="827.4" width="6.2" height="15.4" fill="#2a8ad8"/>
  <g fill="#fff"><rect x="1012.5" y="830.9" width="4.8" height="1.1"/><rect x="1014.4" y="829" width="1.1" height="4.8"/><rect x="1020" y="830.9" width="4" height="1.1" fill="#aaa"/></g>
  <path d="M1020.6 837.2 L1023.8 840.4 M1023.8 837.2 L1020.6 840.4" stroke="#ddd" stroke-width="1"/>
  <rect x="1012.5" y="839" width="4.8" height="1" fill="#888"/>
  <!-- 20 clock -->
  <g filter="url(#sh)"><circle cx="1061" cy="830.8" r="14.5" fill="#eef0f1" stroke="#a9aaa6" stroke-width="1"/></g>
  <text x="1058.6" y="822" font-size="5.5" fill="#5a8ac8" font-family="Liberation Sans" textLength="5" lengthAdjust="spacingAndGlyphs">12</text>
  <path d="M1061 831 H1073" stroke="#c9cbcc" stroke-width="1"/>
  <path d="M1061.3 822.5 L1061 830.5" stroke="#d6b24a" stroke-width="1"/>
  <path d="M1061.1 829.5 L1060.2 838" stroke="#3b3b3b" stroke-width="1.8"/>
</svg>
</body></html>
